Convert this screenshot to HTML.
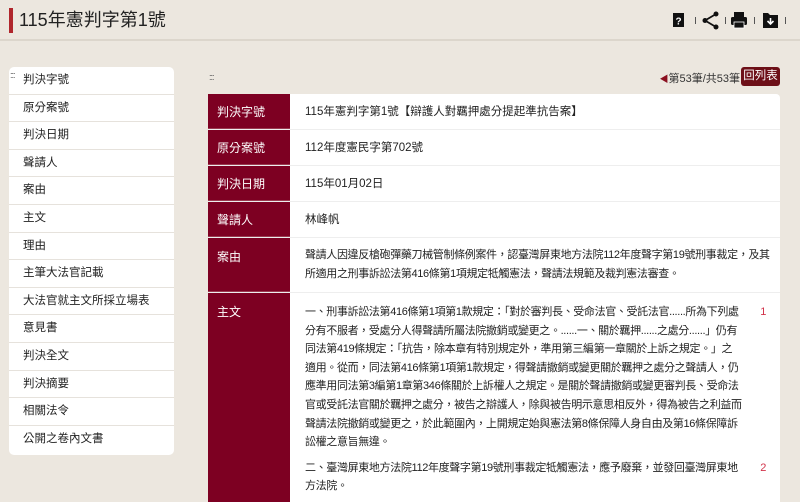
<!DOCTYPE html>
<html><head><meta charset="utf-8"><style>
*{margin:0;padding:0;box-sizing:border-box}
html,body{width:800px;height:502px;overflow:hidden}
body{background:#ece7df;font-family:"Liberation Sans","Noto Sans CJK TC",sans-serif;color:#222;position:relative}
.hdr{position:absolute;left:0;top:0;width:800px;height:41px;border-bottom:2px solid #dcd6cc}
.bar{position:absolute;left:9px;top:8px;width:4px;height:25px;background:#b0262c}
.ttl{position:absolute;left:19px;top:8px;font-size:18px;line-height:24px;color:#222}
.icons{position:absolute;top:10px;left:670px}
.side{position:absolute;left:9px;top:67px;width:165px;background:#fff;border-radius:5px;height:388px}
.side div{height:27.6px;line-height:27px;padding-left:14px;font-size:11.5px;border-bottom:1px solid #e6e2dc;color:#222}
.dots{position:absolute;font-size:9px;color:#555;letter-spacing:-1px;line-height:6px}
.nav{position:absolute;right:60px;top:70px;font-size:11px;color:#333;white-space:nowrap}
.nav b{color:#8b1020;font-size:9px}
.btn{position:absolute;left:741px;top:67px;width:39px;height:19px;background:#6d1018;border-radius:3px;color:#fff;font-size:11.5px;line-height:19px;text-align:center}
.tbl{position:absolute;left:208px;top:94px;width:572px;height:408px;overflow:hidden;background:#fff;border-radius:0 4px 0 0}
.r{display:flex;border-bottom:1px solid #eee}
.l{width:82px;background:#7d0022;color:#fff;font-size:12px;padding:0 9px;flex:none;border-bottom:1px solid #9a3a50}
.v{flex:1;font-size:11.5px;padding:0 12px 0 15px;color:#222}
.fn{position:absolute;right:-24px;top:0;color:#d2334a;font-size:11px}
.s{font-size:11px;letter-spacing:-0.35px}
p{position:relative}
</style></head><body>
<div class="hdr"><div class="bar"></div><div class="ttl">115年憲判字第1號</div>
<svg class="icons" width="122" height="20" viewBox="0 0 122 20">
<rect x="3" y="3" width="11" height="14" fill="#111"/><text x="5.5" y="14.5" font-size="10" fill="#fff" font-family="Liberation Sans" font-weight="bold">?</text>
<rect x="25" y="7" width="1" height="7" fill="#555"/>
<circle cx="35" cy="10.5" r="2.5" fill="#111"/><circle cx="46" cy="4" r="2.5" fill="#111"/><circle cx="46" cy="17" r="2.5" fill="#111"/><path d="M35 10.5L46 4M35 10.5L46 17" stroke="#111" stroke-width="1.8"/>
<rect x="55" y="7" width="1" height="7" fill="#555"/>
<rect x="64" y="2" width="10" height="5" fill="#111"/><rect x="61" y="7" width="16" height="8" rx="1.5" fill="#111"/><rect x="64" y="12" width="10" height="6" fill="#111" stroke="#fff" stroke-width="0.8"/>
<rect x="84" y="7" width="1" height="7" fill="#555"/>
<path d="M93 3h5l2 2h8v13h-15z" fill="#111"/><path d="M100.5 8v5.5M97.5 11l3 3 3-3" stroke="#fff" stroke-width="1.6" fill="none"/>
<rect x="115" y="7" width="1" height="7" fill="#555"/>
</svg></div>
<div class="side">
<div>判決字號</div><div>原分案號</div><div>判決日期</div><div>聲請人</div><div>案由</div><div>主文</div><div>理由</div><div>主筆大法官記載</div><div>大法官就主文所採立場表</div><div>意見書</div><div>判決全文</div><div>判決摘要</div><div>相關法令</div><div style="border:none">公開之卷內文書</div>
</div>
<div class="dots" style="left:10px;top:72px">:::</div>
<div class="dots" style="left:209px;top:74px">:::</div>
<div class="nav"><b>◀</b>第53筆/共53筆</div>
<div class="btn">回列表</div>
<div class="tbl">
<div class="r" style="height:36px"><div class="l" style="line-height:36px">判決字號</div><div class="v" style="line-height:36px">115年憲判字第1號【辯護人對羈押處分提起準抗告案】</div></div>
<div class="r" style="height:36px"><div class="l" style="line-height:36px">原分案號</div><div class="v" style="line-height:36px">112年度憲民字第702號</div></div>
<div class="r" style="height:36px"><div class="l" style="line-height:36px">判決日期</div><div class="v" style="line-height:36px">115年01月02日</div></div>
<div class="r" style="height:36px"><div class="l" style="line-height:36px">聲請人</div><div class="v" style="line-height:36px">林峰帆</div></div>
<div class="r" style="height:55px"><div class="l" style="padding-top:10px">案由</div><div class="v s" style="line-height:19px;padding-top:8px;padding-right:10px">聲請人因違反槍砲彈藥刀械管制條例案件，認臺灣屏東地方法院112年度聲字第19號刑事裁定，及其所適用之刑事訴訟法第416條第1項規定牴觸憲法，聲請法規範及裁判憲法審查。</div></div>
<div class="r" style="height:240px"><div class="l" style="padding-top:10px">主文</div><div class="v s" style="line-height:18.6px;padding:10px 38px 0 15px">
<p>一、刑事訴訟法第416條第1項第1款規定：「對於審判長、受命法官、受託法官......所為下列處分有不服者，受處分人得聲請所屬法院撤銷或變更之。......一、關於羈押......之處分......」仍有同法第419條規定：「抗告，除本章有特別規定外，準用第三編第一章關於上訴之規定。」之適用。從而，同法第416條第1項第1款規定，得聲請撤銷或變更關於羈押之處分之聲請人，仍應準用同法第3編第1章第346條關於上訴權人之規定。是關於聲請撤銷或變更審判長、受命法官或受託法官關於羈押之處分，被告之辯護人，除與被告明示意思相反外，得為被告之利益而聲請法院撤銷或變更之，於此範圍內，上開規定始與憲法第8條保障人身自由及第16條保障訴訟權之意旨無違。<span class="fn">1</span></p>
<p style="margin-top:7px">二、臺灣屏東地方法院112年度聲字第19號刑事裁定牴觸憲法，應予廢棄，並發回臺灣屏東地方法院。<span class="fn">2</span></p>
</div></div>
</div>
</body></html>
